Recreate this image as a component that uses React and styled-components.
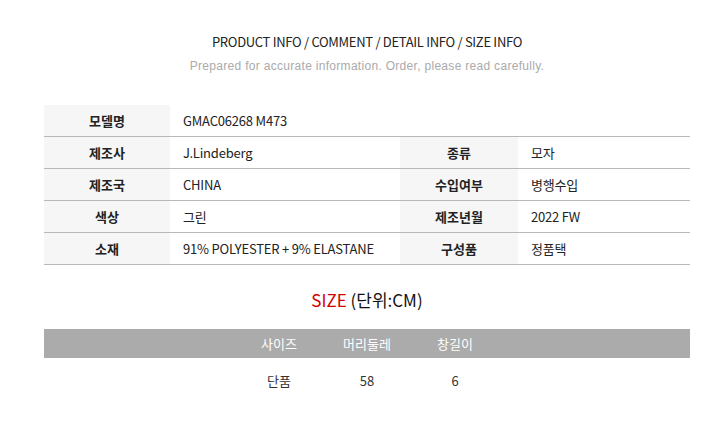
import React from "react"
import styled, { createGlobalStyle } from "styled-components"

const GlobalStyle = createGlobalStyle`
body {
  margin: 0;
  background: #fff;
  font-family: "Noto Sans CJK KR", "Noto Sans", sans-serif;
}
`

const Page = styled.div`
width: 646px;
margin-left: 44px;
padding-top: 32px;
`

const Heading = styled.h2`
margin: 0;
text-align: center;
font-size: 13px;
font-weight: 400;
color: #222;
line-height: 20px;
letter-spacing: -0.3px;
`

const SubHeading = styled.p`
margin: 4px 0 0;
text-align: center;
font-family: "Liberation Sans", Arial, sans-serif;
font-size: 12px;
letter-spacing: 0.3px;
color: #aaa;
line-height: 20px;
`

const InfoTable = styled.div`
margin-top: 29px;
display: grid;
grid-template-columns: 126px 230px 118px 1fr;
`

const Label = styled.div`
display: flex;
align-items: center;
justify-content: center;
height: 31px;
background: #f6f6f6;
border-bottom: 1px solid #b8b8b8;
font-size: 13px;
font-weight: 700;
color: #222;
`

const Value = styled.div`
display: flex;
align-items: center;
height: 31px;
padding-left: 13px;
border-bottom: 1px solid #b8b8b8;
font-size: 13px;
letter-spacing: -0.2px;
color: #222;
grid-column: ${(p) => (p.wide ? "span 3" : "auto")};
`

const SizeTitle = styled.div`
margin-top: 24px;
text-align: center;
font-size: 17px;
line-height: 22px;
color: #111;
`

const Red = styled.span`
color: #d40000;
`

const SizeTable = styled.div`
margin-top: 18px;
`

const SizeRow = styled.div`
display: grid;
grid-template-columns: repeat(3, 88px);
justify-content: center;
height: ${(p) => (p.head ? "29px" : "44px")};
align-items: center;
background: ${(p) => (p.head ? "#ababab" : "transparent")};
color: ${(p) => (p.head ? "#fff" : "#333")};
font-size: 13px;
`

const SizeCell = styled.div`
text-align: center;
`

const rows = [
  [["모델명", "GMAC06268 M473"]],
  [["제조사", "J.Lindeberg"], ["종류", "모자"]],
  [["제조국", "CHINA"], ["수입여부", "병행수입"]],
  [["색상", "그린"], ["제조년월", "2022 FW"]],
  [["소재", "91% POLYESTER + 9% ELASTANE"], ["구성품", "정품택"]],
]

export default function App() {
  return (
    <>
      <GlobalStyle />
      <Page>
        <Heading>PRODUCT INFO / COMMENT / DETAIL INFO / SIZE INFO</Heading>
        <SubHeading>Prepared for accurate information. Order, please read carefully.</SubHeading>
        <InfoTable>
          {rows.map((row) =>
            row.map(([label, value]) => (
              <React.Fragment key={label}>
                <Label>{label}</Label>
                <Value wide={row.length === 1}>{value}</Value>
              </React.Fragment>
            ))
          )}
        </InfoTable>
        <SizeTitle>
          <Red>SIZE</Red> (단위:CM)
        </SizeTitle>
        <SizeTable>
          <SizeRow head>
            <SizeCell>사이즈</SizeCell>
            <SizeCell>머리둘레</SizeCell>
            <SizeCell>창길이</SizeCell>
          </SizeRow>
          <SizeRow>
            <SizeCell>단품</SizeCell>
            <SizeCell>58</SizeCell>
            <SizeCell>6</SizeCell>
          </SizeRow>
        </SizeTable>
      </Page>
    </>
  )
}
